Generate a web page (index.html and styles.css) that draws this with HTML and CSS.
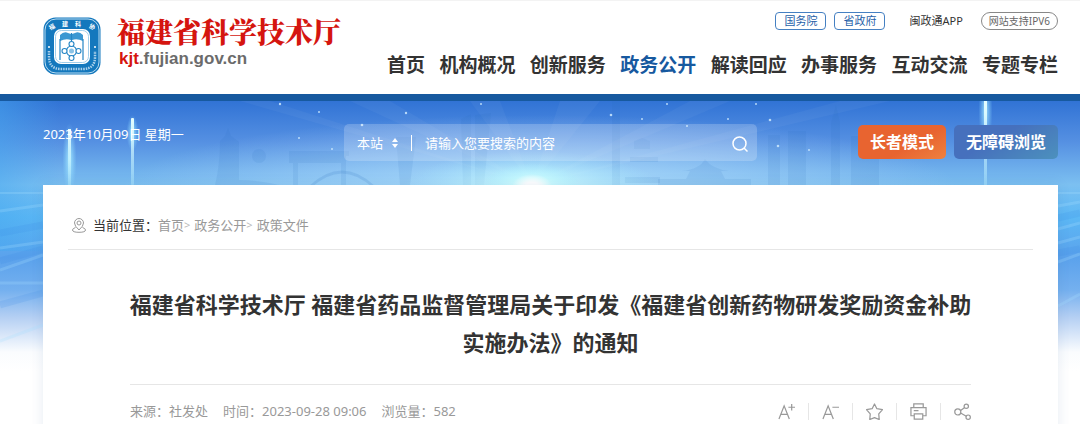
FILE: index.html
```html
<!DOCTYPE html>
<html lang="zh">
	<head>
		<meta charset="UTF-8" />
		<meta name="viewport" content="width=device-width, initial-scale=1.0" />
		<title>福建省科学技术厅</title>
		<link rel="stylesheet" href="styles.css">
	</head>
	<body>
		<header class="header">
			<a class="logo" href="#">
				<svg class="emblem" viewBox="0 0 58 58" width="58" height="58" aria-hidden="true">
					<rect x="0.5" y="0.5" width="57" height="57" rx="12" fill="#1478bd" />
					<rect x="2" y="2" width="54" height="54" rx="11" fill="none" stroke="#b9dcf2" stroke-width="1" />
					<rect x="11" y="12" width="36" height="35" rx="7" fill="#fff" />
					<rect x="12.500" y="13.500" width="33" height="32" rx="6" fill="none" stroke="#8ac3e6" stroke-width="0.800" />
					<path d="M17 24V18q4-4 8-2l3 1v6q-5-2-11 1zM40 24V18q-4-4-8-2l-3 1v6q5-2 11 1z" fill="#3b98d2" />
					<path d="M17 22v21M40 22v21M28.500 16v8" stroke="#2586c5" stroke-width="1.200" fill="none" />
					<g fill="#fff" stroke="#2586c5" stroke-width="1.100">
						<circle cx="28.500" cy="34" r="5" />
						<circle cx="28.500" cy="27" r="2.500" />
						<circle cx="28.500" cy="41" r="2.500" />
						<circle cx="21.500" cy="34" r="2.500" />
						<circle cx="35.500" cy="34" r="2.500" />
					</g>
					<circle cx="28.500" cy="34" r="2.500" fill="#8ac3e6" />
					<g fill="#fff" font-family="Noto Sans CJK SC, sans-serif" font-weight="bold" font-size="6">
						<text x="6" y="12" transform="rotate(-28 9 10)">福</text>
						<text x="19" y="9">建</text>
						<text x="32" y="9">科</text>
						<text x="46" y="12" transform="rotate(28 49 10)">协</text>
					</g>
					<circle cx="6" cy="30" r="1" fill="#fff" />
					<circle cx="52" cy="30" r="1" fill="#fff" />
					<path d="M6 34v6q0 12 12 12h22q12 0 12-12v-6" fill="none" stroke="#cfe6f5" stroke-opacity="0.800" stroke-width="2.500" stroke-dasharray="1.500 1" />
				</svg>
				<span class="site-name">
					<strong>福建省科学技术厅</strong>
					<span class="domain"><b>kjt</b>.fujian.gov.cn</span>
				</span>
			</a>
			<div class="header-right">
				<div class="top-links">
					<a class="tag" href="#">国务院</a>
					<a class="tag" href="#">省政府</a>
					<a class="app" href="#">闽政通APP</a>
					<a class="ipv6" href="#">网站支持IPV6</a>
				</div>
				<nav class="nav">
					<a href="#">首页</a>
					<a href="#">机构概况</a>
					<a href="#">创新服务</a>
					<a class="active" href="#">政务公开</a>
					<a href="#">解读回应</a>
					<a href="#">办事服务</a>
					<a href="#">互动交流</a>
					<a href="#">专题专栏</a>
				</nav>
			</div>
		</header>

		<main class="main">
			<!-- 背景图 -->
			<svg class="bg" viewBox="0 0 1080 270" preserveAspectRatio="xMidYMin slice" aria-hidden="true">
				<defs>
					<linearGradient id="sky" x1="0" y1="0" x2="0" y2="1">
						<stop offset="0" stop-color="#3173d5" />
						<stop offset="0.150" stop-color="#5590e2" />
						<stop offset="0.310" stop-color="#7cc0f1" />
						<stop offset="0.430" stop-color="#5cb8f5" />
						<stop offset="0.580" stop-color="#5ba2ec" />
						<stop offset="0.700" stop-color="#74b0ef" />
						<stop offset="0.800" stop-color="#b4cff3" />
						<stop offset="0.930" stop-color="#fafcfe" />
						<stop offset="1" stop-color="#fff" />
					</linearGradient>
					<radialGradient id="haze">
						<stop offset="0" stop-color="#bfe9ff" stop-opacity="0.800" />
						<stop offset="1" stop-color="#bfe0ff" stop-opacity="0" />
					</radialGradient>
					<radialGradient id="glow">
						<stop offset="0" stop-color="#fff" />
						<stop offset="0.300" stop-color="#d0ffff" stop-opacity="0.900" />
						<stop offset="1" stop-color="#a5efff" stop-opacity="0" />
					</radialGradient>
					<radialGradient id="core">
						<stop offset="0.300" stop-color="#fff" />
						<stop offset="1" stop-color="#fff" stop-opacity="0" />
					</radialGradient>
					<radialGradient id="halo">
						<stop offset="0" stop-color="#a8ecff" stop-opacity="0.900" />
						<stop offset="1" stop-color="#8edbff" stop-opacity="0" />
					</radialGradient>
					<linearGradient id="beam" x1="0" y1="0" x2="0" y2="1">
						<stop offset="0" stop-color="#e6ffff" />
						<stop offset="1" stop-color="#b9f0ff" stop-opacity="0.400" />
					</linearGradient>
					<linearGradient id="left" x1="0" x2="1">
						<stop offset="0" stop-color="#46a8f0" stop-opacity="0.500" />
						<stop offset="1" stop-color="#46a8f0" stop-opacity="0" />
					</linearGradient>
				</defs>
				<rect width="1080" height="270" fill="url(#sky)" />
				<rect width="60" height="150" fill="url(#left)" />
				<ellipse cx="540" cy="90" rx="420" ry="76" fill="url(#haze)" />
				<g fill="#fff" fill-opacity="0.040">
					<path d="M532 84L240 0h30zM532 84L350 0h40zM532 84L470 0h30zM532 84L560 0h40zM532 84L690 0h40zM532 84L840 0h50z" />
				</g>
				<!-- 建筑剪影 -->
				<g fill="#2869b9" fill-opacity="0.100">
					<path d="M215 84q5-20 5-44l5-5 3-8 3 8 8 6v38q20 0 40 5z" />
					<circle cx="259" cy="55" r="7" />
					<path d="M289 50h60v5h-3v29h-5V62h-43v22h-5V62h-4z" />
					<path d="M461 18l10-5v71h-8zM475 14l16-2-7 72h-9zM396 36h20l-6 48h-10z" />
					<path d="M612 0h8v84h-8zM634 40l8-3 8 3v8h-16zM630 56h28v5h-28zM625 76h35v6h-35z" />
					<path d="M658 78h28l4-8h-8q18-2 23-12 7 10 24 12h-8l4 8h26v6h-93z" />
					<path d="M768 34h12v50h-12zM788 30h18v54h-18zM831 22l5-18 4 18v62h-9zM851 35h28v49h-28z" />
				</g>
				<path d="M310 86q32-30 64 0" fill="none" stroke="#2869b9" stroke-opacity="0.150" stroke-width="3" />
				<ellipse cx="532" cy="88" rx="130" ry="38" fill="url(#glow)" opacity="0.750" />
				<ellipse cx="532" cy="86" rx="50" ry="24" fill="url(#glow)" />
				<ellipse cx="532" cy="85" rx="20" ry="12" fill="url(#core)" />
				<g stroke="#a8e1ff" stroke-opacity="0.250" fill="none">
					<path d="M0 92h1080" stroke-width="2" />
					<path d="M0 110l43-6M0 147l43-6M0 169l43-15M0 182h43M0 240l43-16M1058 105l22-4M1058 128l22-6M1058 142l22-6M1058 161l22-8M1058 205l22-12" stroke-width="3" />
				</g>
				<path d="M0 132l43-8M0 160l43-12M0 204l43-12M1058 117l22-5M1058 152l22-4" stroke="#3988e6" stroke-opacity="0.150" stroke-width="7" fill="none" />
				<ellipse cx="69.500" cy="58" rx="7" ry="36" fill="url(#halo)" />
				<ellipse cx="132.500" cy="32" rx="6" ry="18" fill="url(#halo)" />
				<ellipse cx="985.500" cy="10" rx="7" ry="34" fill="url(#halo)" />
				<rect x="68" y="28" width="3" height="57" fill="url(#beam)" />
				<rect x="131" y="17" width="3" height="67" rx="1" fill="url(#beam)" />
				<rect x="984" y="0" width="3" height="85" fill="url(#beam)" />
				<g fill="#d5efff" fill-opacity="0.800">
					<circle cx="280" cy="3" r="1.200" />
					<circle cx="319" cy="11" r="1" />
					<circle cx="299" cy="37" r="1" />
					<circle cx="332" cy="48" r="1" />
					<circle cx="362" cy="24" r="1.300" />
					<circle cx="406" cy="12" r="1.200" />
					<circle cx="481" cy="3" r="1" />
					<circle cx="611" cy="14" r="1.300" />
					<circle cx="642" cy="18" r="1" />
					<circle cx="667" cy="3" r="1" />
					<circle cx="687" cy="25" r="1" />
					<circle cx="728" cy="18" r="1" />
					<circle cx="756" cy="3" r="1" />
					<circle cx="770" cy="19" r="1.300" />
					<circle cx="778" cy="45" r="1.300" />
					<circle cx="809" cy="49" r="1" />
				</g>
			</svg>

			<div class="toolbar">
				<span class="date">2023年10月09日 星期一</span>
				<form class="search">
					<label class="scope">
						<select aria-label="搜索范围">
							<option>本站</option>
						</select>
						<svg viewBox="0 0 6 10" width="6" height="10" aria-hidden="true">
							<path d="M0 4l3-4 3 4zM0 6l3 4 3-4z" fill="#fff" />
						</svg>
					</label>
					<input type="text" placeholder="请输入您要搜索的内容" aria-label="搜索内容" />
					<button type="button" aria-label="搜索">
						<svg viewBox="0 0 16 16" width="16" height="16" fill="none" stroke="#fff" stroke-width="1.500">
							<circle cx="7.500" cy="7.500" r="6.500" />
							<path d="M12 12l3.500 3.500" />
						</svg>
					</button>
				</form>
				<div class="modes">
					<button type="button" class="elder">长者模式</button>
					<button type="button" class="barrier">无障碍浏览</button>
				</div>
			</div>

			<div class="card">
				<div class="crumbs">
					<svg viewBox="0 0 14 15" width="14" height="15" fill="none" stroke="#999" aria-hidden="true">
						<path d="M7 12Q2.500 8 2.500 5a4.500 4.500 0 0 1 9 0Q11.500 8 7 12z" />
						<circle cx="7" cy="5" r="2" />
						<path d="M3.500 9.500Q.5 10.500.5 12q0 2.300 6.500 2.300t6.500-2.300q0-1.500-3-2.500" />
					</svg>
					<span class="label">当前位置：</span>
					<a href="#">首页</a><i>&gt;</i>
					<a href="#">政务公开</a><i>&gt;</i>
					<a href="#">政策文件</a>
				</div>
				<article class="article">
					<h1>福建省科学技术厅 福建省药品监督管理局关于印发《福建省创新药物研发奖励资金补助<br>实施办法》的通知</h1>
					<div class="meta">
						<span>来源：社发处</span>
						<span>时间：2023-09-28 09:06</span>
						<span>浏览量：582</span>
						<div class="tools">
							<button type="button" aria-label="放大字体">
								<svg viewBox="0 0 18 18" width="17" height="17"><path d="M1 17L6.500 3 12 17M3 12h7M11 4.500h7M14.500 1v7" /></svg>
							</button>
							<button type="button" aria-label="缩小字体">
								<svg viewBox="0 0 18 18" width="17" height="17"><path d="M1 17L6.500 3 12 17M3 12h7M11 4.500h7" /></svg>
							</button>
							<button type="button" aria-label="收藏">
								<svg viewBox="0 0 18 18" width="17" height="17"><path d="M9 1l2.500 5 6 1-4 4.500.5 6-5-2-5 2 .5-6L.5 7l6-1z" stroke-linejoin="round" /></svg>
							</button>
							<button type="button" aria-label="打印">
								<svg viewBox="0 0 18 18" width="17" height="17"><path d="M4 5V1h10v4M4 13.500H1V5h16v8.500h-3M4.500 11.500h9V17h-9zM4 8h5" /></svg>
							</button>
							<button type="button" aria-label="分享">
								<svg viewBox="0 0 18 18" width="17" height="17"><circle cx="4" cy="9.500" r="3.200" /><circle cx="13" cy="3.500" r="2.300" /><circle cx="15" cy="15" r="2.300" /><path d="M7 8l4-3M7 10.500l6 3.500" /></svg>
							</button>
						</div>
					</div>
				</article>
			</div>
		</main>
	</body>
</html>
```

FILE: styles.css
```css
body {
	margin: 0;
	font: 13px/20px "Noto Sans", "Noto Sans CJK SC", sans-serif;
	color: #333;
	background: #fff;
}
a {
	color: inherit;
	text-decoration: none;
}
button,
input,
select {
	margin: 0;
	padding: 0;
	border: 0;
	background: none;
	font: inherit;
	color: inherit;
}
svg {
	display: block;
}
.header {
	display: flex;
	justify-content: space-between;
	box-sizing: border-box;
	height: 101px;
	padding: 0 22px 0 43px;
	border-top: 1px solid #f3f3f3;
	border-bottom: 7px solid #17599f;
}
.logo {
	display: flex;
	align-items: flex-start;
	gap: 16px;
	padding-top: 16px;
}
.site-name strong {
	display: block;
	font-family: "Noto Serif CJK SC", "Noto Sans CJK SC", serif;
	font-size: 28px;
	font-weight: 900;
	line-height: 28px;
	color: #d5150f;
}
.domain {
	display: block;
	padding: 4px 2px 0;
	font: bold 17px/20px "Liberation Sans", sans-serif;
	color: #6b6b6b;
}
.domain b {
	color: #d5150f;
}
.header-right {
	flex: 0 1 671px;
}
.top-links {
	display: flex;
	justify-content: flex-end;
	align-items: center;
	padding-top: 11px;
	font-size: 11px;
	line-height: 16px;
}
.tag {
	margin-right: 8px;
	padding: 0 8px;
	border: 1px solid #4580c2;
	border-radius: 4px;
	color: #2761a8;
}
.app {
	margin: 0 18px 0 16px;
}
.ipv6 {
	padding: 0 7px;
	border: 1px solid #888;
	border-radius: 9px;
	font-size: 10px;
	color: #666;
}
.nav {
	display: flex;
	justify-content: space-between;
	padding-top: 21px;
	font-size: 19px;
	font-weight: bold;
	line-height: 28px;
	white-space: nowrap;
}
.nav .active {
	color: #17599f;
}
.main {
	position: relative;
	padding: 0 22px 0 43px;
}
.bg {
	position: absolute;
	top: 0;
	left: 0;
	width: 100%;
	height: 270px;
	z-index: -1;
}
.toolbar {
	display: flex;
	align-items: flex-start;
	height: 61px;
	padding-top: 23px;
	color: #fff;
}
.date {
	flex: 0 0 301px;
}
.search {
	flex: 0 1 413px;
	display: flex;
	align-items: center;
	height: 37px;
	border-radius: 5px;
	background: rgba(255, 255, 255, 0.2);
}
.scope {
	display: flex;
	align-items: center;
	gap: 8px;
	margin-left: 13px;
	padding-right: 13px;
	border-right: 1px solid #fff;
	line-height: 16px;
}
.scope select {
	appearance: none;
	line-height: 16px;
}
.search input {
	flex: 1;
	min-width: 0;
	padding-left: 13px;
	outline: none;
}
.search input::placeholder {
	color: #fff;
	opacity: 1;
}
.search button {
	padding: 3px 9px 0;
}
.modes {
	display: flex;
	gap: 8px;
	margin-left: auto;
	padding-top: 1px;
}
.modes button {
	padding: 0 12px;
	border-radius: 5px;
	font-size: 16px;
	font-weight: bold;
	line-height: 34px;
	white-space: nowrap;
}
.elder {
	background: linear-gradient(150deg, #e86430 60%, #ee8140);
}
.barrier {
	background: linear-gradient(150deg, #4670bd 40%, #4c91bd);
}
.card {
	padding: 0 25px 30px;
	background: #fff;
	box-shadow: 0 0 12px rgba(50, 90, 150, 0.12);
}
.crumbs {
	display: flex;
	align-items: center;
	box-sizing: border-box;
	height: 65px;
	padding: 16px 4px 0;
	border-bottom: 1px solid #e6e6e6;
	color: #999;
}
.crumbs .label {
	margin-left: 7px;
	color: #333;
}
.crumbs i {
	margin-right: 4px;
	font-size: 11px;
	font-style: normal;
	color: #bbb;
}
.article {
	padding: 0 62px;
}
.article h1 {
	margin: 0 -4px;
	padding: 35px 0 23px;
	font-size: 22px;
	line-height: 38px;
	text-align: center;
}
.meta {
	display: flex;
	align-items: center;
	gap: 15px;
	padding-top: 16px;
	border-top: 1px solid #e6e6e6;
	color: #999;
}
.tools {
	display: flex;
	margin-left: auto;
}
.tools button {
	padding: 0 13px;
	border-right: 1px solid #e6e6e6;
}
.tools button:last-child {
	padding-right: 0;
	border: 0;
}
.tools svg {
	fill: none;
	stroke: #999;
	stroke-width: 1.3;
}
```
